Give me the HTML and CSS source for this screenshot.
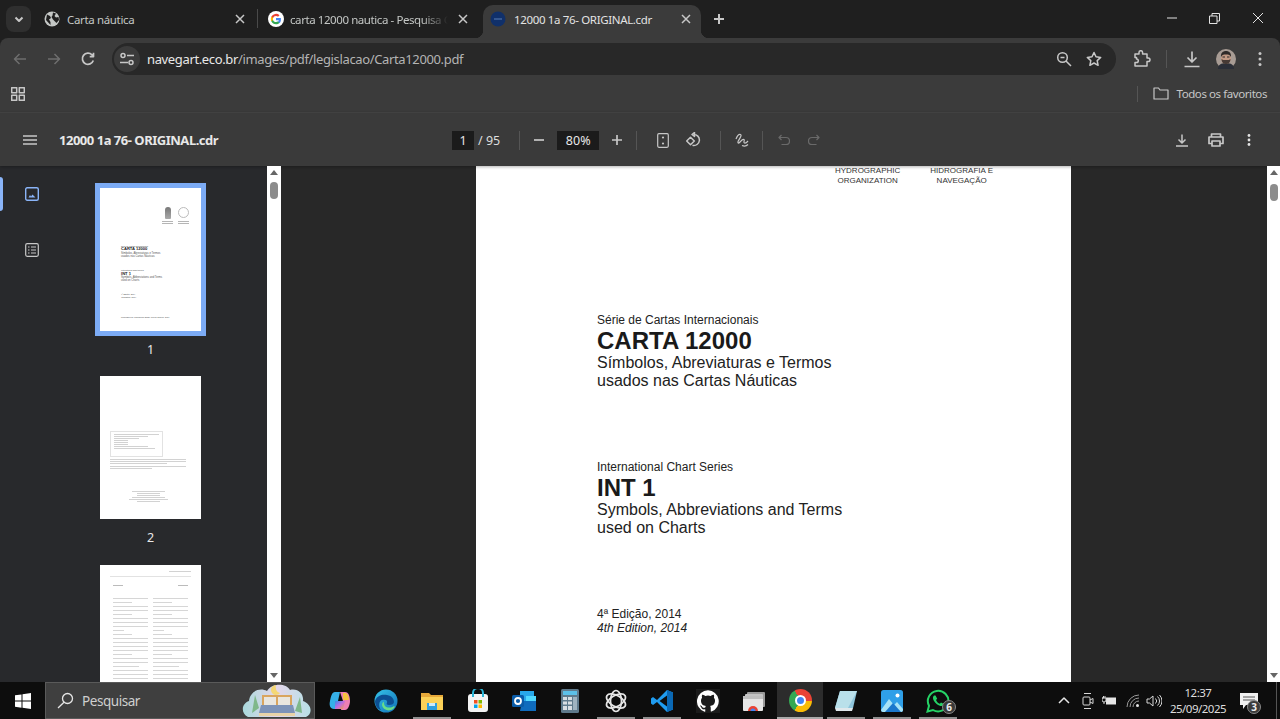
FILE: index.html
```html
<!DOCTYPE html>
<html lang="pt-BR">
<head>
<meta charset="utf-8">
<title>12000 1a 76- ORIGINAL.cdr</title>
<link rel="stylesheet" href="styles.css">
</head>
<body>
<div class="tabstrip">
  <button class="tabsearch"><svg width="12" height="12" viewBox="0 0 12 12"><path d="M2.5 4.5 6 8l3.5-3.5" class="st2"/></svg></button>
  <div class="tab tab1">
    <svg class="fav" width="16" height="16" viewBox="0 0 16 16"><circle cx="8" cy="8" r="7.5" fill="#c4c7c5"/><path d="M3 3.5l3 1.5 1 2-2 1.500 1.500 2.500v3L2 9zM9 1.500l3 1-1.500 2.500L12 6.500l2.500-.5.500 3-2.500 3L10.500 10 9 8.500 7.500 6l1-1.500z" fill="#1f1f1f"/></svg>
    <span class="tabtitle">Carta náutica</span>
    <svg class="tabx" width="10" height="10" viewBox="0 0 10 10"><path d="M1 1l8 8M9 1l-8 8" class="st15"/></svg>
  </div>
  <i class="tabsep"></i>
  <div class="tab tab2">
    <svg class="fav" width="16" height="16" viewBox="0 0 16 16"><circle cx="8" cy="8" r="8" fill="#fff"/><path d="M12.900 8.200c0-.4 0-.8-.1-1.100H8v2.100h2.800c-.1.700-.5 1.200-1 1.600v1.300h1.700c1-.9 1.400-2.300 1.400-3.900z" fill="#4285f4"/><path d="M8 13.200c1.400 0 2.600-.5 3.500-1.300l-1.700-1.300c-.5.300-1.100.5-1.800.5-1.400 0-2.500-.9-2.900-2.200H3.300v1.300A5.200 5.200 0 0 0 8 13.200z" fill="#34a853"/><path d="M5.100 8.900a3.100 3.100 0 0 1 0-1.900V5.700H3.300a5.200 5.200 0 0 0 0 4.600z" fill="#fbbc05"/><path d="M8 4.900c.8 0 1.500.3 2 .8l1.500-1.500A5.200 5.200 0 0 0 3.300 5.700L5.100 7C5.500 5.800 6.600 4.900 8 4.900z" fill="#ea4335"/></svg>
    <span class="tabtitle fade">carta 12000 nautica - Pesquisa G</span>
    <svg class="tabx" width="10" height="10" viewBox="0 0 10 10"><path d="M1 1l8 8M9 1l-8 8" class="st15"/></svg>
  </div>
  <div class="tab tab3">
    <svg class="fav" width="16" height="16" viewBox="0 0 16 16"><circle cx="8" cy="8" r="7.500" fill="#10306a"/><path d="M4 8h8" stroke="#5a7fb5" stroke-width="1"/></svg>
    <span class="tabtitle">12000 1a 76- ORIGINAL.cdr</span>
    <svg class="tabx" width="10" height="10" viewBox="0 0 10 10"><path d="M1 1l8 8M9 1l-8 8" class="st15"/></svg>
  </div>
  <svg class="newtab" width="12" height="12" viewBox="0 0 12 12"><path d="M6 1v10M1 6h10" class="st2"/></svg>
  <div class="winctl">
    <svg width="10" height="10" viewBox="0 0 10 10"><path d="M0 5h10" class="st1"/></svg>
    <svg width="11" height="11" viewBox="0 0 11 11"><path d="M.5 3h7.500v7.500H.5zM3 3V.5h7.500V8H8" class="st1"/></svg>
    <svg width="12" height="12" viewBox="0 0 12 12"><path d="M1 1l10 10M11 1L1 11" class="st1"/></svg>
  </div>
</div>

<div class="toolbar">
  <svg class="navb dim" width="16" height="16" viewBox="0 0 16 16"><path d="M14 8H3M7.500 3 2.500 8l5 5" class="stdim"/></svg>
  <svg class="navb dim" width="16" height="16" viewBox="0 0 16 16"><path d="M2 8h11M8.500 3l5 5-5 5" class="stdim"/></svg>
  <svg class="navb" width="16" height="16" viewBox="0 0 16 16"><path d="M13.300 9.500A5.600 5.600 0 1 1 12 3.800L13.500 5.500M13.500 1.800v3.800H9.700" class="st17"/></svg>
  <div class="omnibox">
    <span class="tune"><svg width="16" height="14" viewBox="0 0 16 14"><circle cx="4" cy="3.500" r="2" class="st15"/><path d="M8 3.500h7M1 10.500h8" class="st15"/><circle cx="12" cy="10.500" r="2" class="st15"/></svg></span>
    <span class="url"><b>navegart.eco.br</b>/images/pdf/legislacao/Carta12000.pdf</span>
    <svg class="omnii" width="16" height="16" viewBox="0 0 16 16"><circle cx="6.500" cy="6.500" r="4.800" class="st15"/><path d="M10 10l5 5M4.500 6.500h4" class="st15"/></svg>
    <svg class="omnii" width="16" height="16" viewBox="0 0 16 16"><path d="M8 1.500l2 4.300 4.700.6-3.500 3.200.9 4.700L8 12l-4.100 2.300.9-4.700L1.300 6.400 6 5.800z" class="st15"/></svg>
  </div>
  <svg class="ext" width="18" height="18" viewBox="0 0 18 18"><path d="M2 4h4V2.500a1.800 1.800 0 0 1 3.600 0V4h4.400v4h1.200a1.800 1.800 0 0 1 0 3.600H14V16H2v-3.500h1.500a1.800 1.800 0 0 0 0-3.600H3.500V7.500H2z" class="st15"/></svg>
  <i class="vsep s1"></i>
  <svg class="dl" width="18" height="18" viewBox="0 0 18 18"><path d="M9 1.500V12M4.500 7.500 9 12l4.500-4.500M1.500 16.500h15" class="st17"/></svg>
  <svg class="avatar" width="20" height="20" viewBox="0 0 20 20"><circle cx="10" cy="10" r="10" fill="#a89c94"/><path d="M2 20c0-4 3-6 8-6s8 2 8 6z" fill="#2b2f38"/><ellipse cx="10" cy="9" rx="5" ry="6" fill="#c39a84"/><path d="M5 8c-.5-4 2-6 5-6s5.500 2 5 6c-1-2-2-2.500-5-2.500S6 6 5 8z" fill="#2f2a28"/><path d="M5.500 10c1 1 2 1 4.500 1s3.500 0 4.500-1c0 3-2 5-4.500 5s-4.500-2-4.500-5z" fill="#463a35"/><path d="M6.500 8h2.500M11 8h2.500" stroke="#2f2a28" stroke-width="1"/></svg>
  <svg class="more" width="4" height="16" viewBox="0 0 4 16"><circle cx="2" cy="2.500" r="1.500" fill="#c7c7c7"/><circle cx="2" cy="8" r="1.500" fill="#c7c7c7"/><circle cx="2" cy="13.500" r="1.500" fill="#c7c7c7"/></svg>
</div>

<div class="bookmarks">
  <svg width="14" height="14" viewBox="0 0 14 14"><path d="M.7.700h5v5h-5zM8.300.700h5v5h-5zM.7 8.300h5v5h-5zM8.300 8.300h5v5h-5z" class="st15"/></svg>
  <i class="vsep s2"></i>
  <svg class="folder" width="16" height="13" viewBox="0 0 16 13"><path d="M1 12V1h4.500l1.500 2h8v9z" class="st12"/></svg>
  <span class="allfav">Todos os favoritos</span>
</div>

<div class="pdfbar">
  <div class="pdfleft">
    <svg width="14" height="10" viewBox="0 0 14 10"><path d="M0 1h14M0 5h14M0 9h14" class="st17"/></svg>
    <span class="docname">12000 1a 76- ORIGINAL.cdr</span>
  </div>
  <div class="pdfmid">
    <span class="numbox pg">1</span>
    <span class="tot">/ 95</span>
    <i class="vsep s3"></i>
    <svg class="m1" width="10" height="2" viewBox="0 0 10 2"><path d="M0 1h10" class="st17"/></svg>
    <span class="numbox zm">80%</span>
    <svg class="m2" width="10" height="10" viewBox="0 0 10 10"><path d="M0 5h10M5 0v10" class="st17"/></svg>
    <i class="vsep s4"></i>
    <svg class="m3" width="12" height="15" viewBox="0 0 12 15"><rect x=".7" y=".7" width="10.600" height="13.600" rx="1.200" class="st12"/><circle cx="6" cy="4.500" r="1.100" fill="#c7c7c7"/><circle cx="6" cy="10.500" r="1.100" fill="#c7c7c7"/></svg>
    <svg class="m4" width="16" height="16" viewBox="0 0 16 16"><path d="M6 2.500l2.500-2v4zM7.500 2.500a5.500 5.500 0 1 1-1 10.800" class="st15"/><path d="M4.500 5.200 8.300 9l-3.800 3.800L.7 9z" class="st15"/></svg>
    <i class="vsep s5"></i>
    <svg class="m5" width="14" height="14" viewBox="0 0 14 14"><path d="M1 6c1-2.500 3-5 4.500-4.500C7 2 5 5 3.500 7.500 2.500 9.500 3 11 4.500 9.500 6 8 7.500 6 9 6.500c1 .5-1 3 .5 3.500 1 .3 2.500-.8 3.500-2M7 12.500c2.500 1 4.500.5 6-1" class="st12"/></svg>
    <i class="vsep s6"></i>
    <svg class="m6" width="12" height="12" viewBox="0 0 12 12"><path d="M3.500 1 1 3.500 3.500 6M1.500 3.500H8a3 3 0 0 1 0 7H3.500" class="stdim2"/></svg>
    <svg class="m7" width="12" height="12" viewBox="0 0 12 12"><path d="M8.500 1 11 3.500 8.500 6M10.500 3.500H4a3 3 0 0 0 0 7h4.500" class="stdim2"/></svg>
  </div>
  <div class="pdfright">
    <svg width="12" height="13" viewBox="0 0 12 13"><path d="M6 .5V8.500M2.500 5.500 6 9l3.500-3.500M0 12h12" class="st15"/></svg>
    <svg width="16" height="14" viewBox="0 0 16 14"><path d="M3.500 4V1h9v3M3.500 10.500H1V4h14v6.500h-2.500M4 8h8v5H4z" class="st17"/></svg>
    <svg class="pmore" width="4" height="12" viewBox="0 0 4 12"><circle cx="2" cy="1.500" r="1.400" fill="#e3e3e3"/><circle cx="2" cy="6" r="1.400" fill="#e3e3e3"/><circle cx="2" cy="10.500" r="1.400" fill="#e3e3e3"/></svg>
  </div>
</div>

<div class="main">
  <aside class="sidebar">
    <nav class="rail">
      <div class="railitem active"><svg width="14" height="14" viewBox="0 0 14 14"><rect x=".7" y=".7" width="12.600" height="12.600" rx="1.500" class="stblue"/><path d="M3.500 10.500 5 8l1 1.500 1.500-2 3 3z" fill="#8ab4f8"/></svg></div>
      <div class="railitem"><svg width="14" height="14" viewBox="0 0 14 14"><rect x=".7" y=".7" width="12.600" height="12.600" rx="1.500" class="st12"/><path d="M3 4h1.500M6 4h5M3 7h1.500M6 7h5M3 10h1.500M6 10h5" class="st12"/></svg></div>
    </nav>
    <div class="thumbs">
      <figure class="thumb current">
        <div class="sheet s-one">
          <div class="logos">
            <span class="logo"><span class="crest"></span><i></i><i></i></span>
            <span class="logo"><span class="seal"></span><i></i><i></i></span>
          </div>
          <p class="t-s">Série de Cartas Internacionais</p>
          <p class="t-b">CARTA 12000</p>
          <p class="t-m">Símbolos, Abreviaturas e Termos<br>usados nas Cartas Náuticas</p>
          <p class="t-s gap">International Chart Series</p>
          <p class="t-b">INT 1</p>
          <p class="t-m">Symbols, Abbreviations and Terms<br>used on Charts</p>
          <p class="t-s gap2">4ª Edição, 2014<br>4th Edition, 2014</p>
          <p class="t-s gap3">Publicado por: Marinha do Brasil, Rio de Janeiro, 2014</p>
        </div>
        <figcaption>1</figcaption>
      </figure>
      <figure class="thumb second">
        <div class="sheet s-two">
          <div class="boxed"><i></i><i class="w8"></i><i class="w6"></i><i class="w3"></i><i class="w3"></i><i class="w3"></i><i class="w8"></i><i class="w9"></i></div>
          <div class="para"><i></i><i></i><i class="w8"></i></div>
          <div class="para"><i></i><i class="w6"></i></div>
          <div class="imprint"><i class="w8"></i><i class="w6"></i><i class="w6"></i><i class="w8"></i><i class="w9"></i><i class="w6"></i></div>
        </div>
        <figcaption>2</figcaption>
      </figure>
      <figure class="thumb">
        <div class="sheet s-three">
          <div class="runhead"><i></i></div>
          <div class="titles"><i></i><i></i></div>
          <div class="cols">
            <div class="col"><i></i><i class="w6"></i><i></i><i></i><i class="w6"></i><i></i><i></i><i></i><i class="w3"></i><i class="w6"></i><i></i><i></i><i></i><i></i><i class="w6"></i><i></i><i></i><i class="w8"></i><i></i><i></i><i></i><i class="w6"></i></div>
            <div class="col"><i></i><i class="w6"></i><i></i><i></i><i class="w6"></i><i></i><i></i><i></i><i class="w3"></i><i class="w6"></i><i></i><i></i><i></i><i></i><i class="w6"></i><i></i><i></i><i class="w8"></i><i></i><i></i><i></i><i class="w6"></i></div>
          </div>
        </div>
      </figure>
    </div>
  </aside>
  <div class="scrollbar">
    <i class="up"></i><i class="grip"></i><i class="down"></i>
  </div>
  <section class="viewer">
    <article class="page">
      <div class="orgs"><p>HYDROGRAPHIC<br>ORGANIZATION</p><p>HIDROGRAFIA E<br>NAVEGAÇÃO</p></div>
      <div class="cover pt">
        <p class="small">Série de Cartas Internacionais</p>
        <h1>CARTA 12000</h1>
        <p class="sub">Símbolos, Abreviaturas e Termos<br>usados nas Cartas Náuticas</p>
      </div>
      <div class="cover en">
        <p class="small">International Chart Series</p>
        <h1>INT 1</h1>
        <p class="sub">Symbols, Abbreviations and Terms<br>used on Charts</p>
      </div>
      <div class="cover ed">
        <p class="edn">4ª Edição, 2014</p>
        <p class="edn"><em>4th Edition, 2014</em></p>
      </div>
    </article>
  </section>
  <div class="scrollbar right">
    <i class="up"></i><i class="grip"></i><i class="down"></i>
  </div>
</div>

<footer class="taskbar">
  <div class="start"><svg width="16" height="16" viewBox="0 0 16 16"><path d="M0 2.300 6.500 1.400v6.200H0zM7.500 1.200 16 0v7.600H7.500zM0 8.500h6.500v6.200L0 13.800zM7.500 8.500H16V16l-8.500-1.200z" fill="#fff"/></svg></div>
  <div class="search">
    <svg width="17" height="17" viewBox="0 0 17 17"><circle cx="10.500" cy="6.500" r="5" class="stw"/><path d="M7 10.200 1 16" class="stw"/></svg>
    <span>Pesquisar</span>
    <svg class="bed" width="70" height="36" viewBox="0 0 70 36"><defs><linearGradient id="cl" x1="0" y1="0" x2="1" y2="0"><stop offset="0" stop-color="#a9d9dc"/><stop offset=".5" stop-color="#e4d6ea"/><stop offset="1" stop-color="#b8e0e6"/></linearGradient></defs><path d="M6 34C-2 30 0 20 7 18 8 8 18 4 25 8 30 0 44 0 48 7c8-2 14 4 13 11 9 3 10 13 3 16z" fill="url(#cl)"/><path d="M10 30 13 12l4 13zM60 30 58 14l-5 14z" fill="#7fb88a"/><path d="M20 12h30v12H20z" fill="#d9a55f"/><path d="M22 14h12v8H22zM36 14h12v8H36z" fill="#e9e6df"/><path d="M19 22h32l2 8H17z" fill="#7d93b8"/><path d="M17 30h36v3H17z" fill="#e8d3a8"/><path d="M34 2a5 5 0 1 0 4 8 6 6 0 0 1-4-8z" fill="#f4d774"/></svg>
  </div>
  <div class="apps">
    <div class="app"><svg width="22" height="22" viewBox="0 0 22 22"><defs><linearGradient id="cp" x1="0" y1="0" x2="1" y2="1"><stop offset="0" stop-color="#2f8fe8"/><stop offset=".5" stop-color="#c56ce0"/><stop offset="1" stop-color="#f5a13a"/></linearGradient></defs><path d="M6 2h5L9 11l-1 8H5C1 19 0 15 1 11 2 6 3 2 6 2z" fill="#35b0e8"/><path d="M11 2h5c4 0 5 5 5 9s-2 9-5 9h-4l2-9z" fill="#ee7fb5"/><path d="M6 11h10l-2 8H6z" fill="url(#cp)"/><path d="M14 3h3c2 1 3 4 3 7h-6z" fill="#f7c23e"/></svg></div>
    <div class="app"><svg width="24" height="24" viewBox="0 0 24 24"><defs><linearGradient id="ed" x1="0" y1="0" x2="1" y2="1"><stop offset="0" stop-color="#36c4e8"/><stop offset="1" stop-color="#1170b8"/></linearGradient></defs><circle cx="12" cy="12" r="11.500" fill="url(#ed)"/><path d="M1 12C3 6 9 5 13 6c5 1 7 4 7 7 0 2-2 3-5 3-2 0-3-1-2-2 1-3-2-4-5-3-3 1-4 6-1 10C3 20 1 16 1 12z" fill="#0c4f93"/><path d="M8 16c1 5 7 7 11 4 2-1 2-3 1-3-3 2-7 2-9 0-1-1-1-3-1-4-1 0-2 1-2 3z" fill="#66dd8a"/></svg></div>
    <div class="app on"><svg width="22" height="20" viewBox="0 0 22 20"><path d="M0 2h8l2 2h12v15H0z" fill="#e7a93a"/><path d="M0 6h22v13H0z" fill="#fbd158"/><path d="M6 12h10v7H6z" fill="#2f9fe0"/><path d="M8 12h6v3H8z" fill="#cfeaf8"/></svg></div>
    <div class="app"><svg width="22" height="24" viewBox="0 0 22 24"><rect x="1" y="5" width="20" height="18" rx="3" fill="#f3f3f3"/><path d="M6 8V4a5 5 0 0 1 10 0v4" fill="none" stroke="#29b6d8" stroke-width="2"/><path d="M7 11h3.500v3.500H7z" fill="#f25022"/><path d="M11.500 11H15v3.500h-3.500z" fill="#7fba00"/><path d="M7 15.500h3.500V19H7z" fill="#00a4ef"/><path d="M11.500 15.500H15V19h-3.500z" fill="#ffb900"/></svg></div>
    <div class="app"><svg width="24" height="22" viewBox="0 0 24 22"><path d="M8 1h14v10H8z" fill="#28a8ea"/><path d="M10 11h14v10H8z" fill="#0f6cbd"/><path d="M14 6h10v5H14z" fill="#50d9ff"/><rect x="0" y="5" width="12" height="12" rx="1.500" fill="#0a5ca8"/><circle cx="6" cy="11" r="3" fill="none" stroke="#fff" stroke-width="1.800"/></svg></div>
    <div class="app"><svg width="18" height="24" viewBox="0 0 18 24"><rect width="18" height="24" rx="1.500" fill="#5f7a8c"/><rect x="2" y="2" width="14" height="4" fill="#5cc0e8"/><path d="M2 8h4v3H2zM7 8h4v3H7zM2 12.500h4v3H2zM7 12.500h4v3H7zM2 17h4v4H2zM7 17h4v4H7z" fill="#d7dde2"/><path d="M12 8h4v13h-4z" fill="#9fb3c0"/></svg></div>
    <div class="app on"><svg width="24" height="24" viewBox="0 0 24 24"><g fill="none" stroke="#e6e6e6" stroke-width="1.700"><ellipse cx="12" cy="12" rx="5.500" ry="10.500"/><ellipse cx="12" cy="12" rx="5.500" ry="10.500" transform="rotate(60 12 12)"/><ellipse cx="12" cy="12" rx="5.500" ry="10.500" transform="rotate(120 12 12)"/></g></svg></div>
    <div class="app on"><svg width="24" height="24" viewBox="0 0 24 24"><path d="M17 1 7 11 3 8 1 9.500v5L3 16l4-3 10 10 6-2.500V3.500z" fill="#1f9cf0"/><path d="M17 6.500v11L9.500 12z" fill="#0d0d0d"/><path d="M17 1l6 2.500v17L17 23z" fill="#0a68b4"/></svg></div>
    <div class="app"><span class="ghbox"><svg width="22" height="22" viewBox="0 0 16 16"><path d="M8 .2a8 8 0 0 0-2.500 15.600c.4.100.5-.2.500-.4v-1.400c-2.200.5-2.700-1-2.700-1-.4-.9-.9-1.200-.9-1.200-.7-.5.100-.5.100-.5.800.1 1.200.8 1.200.8.700 1.200 1.900.9 2.300.7.100-.5.300-.9.500-1.100-1.800-.2-3.600-.9-3.600-4 0-.9.300-1.600.8-2.100-.1-.2-.4-1 .1-2.100 0 0 .7-.2 2.200.8a7.600 7.600 0 0 1 4 0c1.500-1 2.200-.8 2.200-.8.400 1.100.2 1.900.1 2.100.5.600.8 1.300.8 2.100 0 3.100-1.900 3.700-3.600 3.900.3.200.5.700.5 1.500v2.200c0 .2.100.5.600.4A8 8 0 0 0 8 .2z" fill="#fff"/></svg></span></div>
    <div class="app"><svg width="22" height="20" viewBox="0 0 22 20"><rect x="4" y="1" width="18" height="15" rx="1" fill="#9a9a9a"/><rect x="2" y="3" width="18" height="15" rx="1" fill="#c4c4c4"/><rect x="0" y="5" width="20" height="15" rx="1" fill="#e6e6e6"/><rect x="0" y="5" width="20" height="3" fill="#bfbfbf"/><path d="M5 20a5 5 0 0 1 10 0z" fill="#ea4335"/><path d="M7.500 20a2.500 2.500 0 0 1 5 0z" fill="#4285f4"/></svg></div>
    <div class="app active"><span class="chrome"><span></span></span></div>
    <div class="app on"><svg width="24" height="22" viewBox="0 0 24 22"><path d="M6 1h17l-4 17H1z" fill="#8fc6dc"/><path d="M6 1h17l-9 17H1z" fill="#b9e0ea"/><path d="M1 18h18l-1 3H2z" fill="#dfe8ec"/></svg></div>
    <div class="app on"><svg width="22" height="22" viewBox="0 0 22 22"><rect width="22" height="22" rx="2.500" fill="#2f9fe8"/><path d="M0 20 8 9l5 6 3-3 6 7v1a2 2 0 0 1-2 2H2a2 2 0 0 1-2-2z" fill="#a7e3f7"/><path d="M4 22l8-9 8 9z" fill="#1b78cc"/><circle cx="16.500" cy="5.500" r="2" fill="#fff"/></svg></div>
    <div class="app on wa"><svg width="24" height="24" viewBox="0 0 24 24"><path d="M1.500 22.500 3 16.800A10.300 10.300 0 1 1 7 21z" fill="none" stroke="#25d366" stroke-width="2"/><path d="M8 6.500c-1.300 1-1.500 3 0 5.500s4 4.500 6.500 5c2 .3 3-1 3-2.300l-2.500-1.300-1.200 1.300c-1.500-.5-3-2-3.800-3.800l1.200-1.200L9.500 6.500z" fill="#25d366"/></svg><span class="badge">6</span></div>
  </div>
  <div class="tray">
    <svg class="caret" width="12" height="7" viewBox="0 0 12 7"><path d="M1 6l5-5 5 5" class="stw15"/></svg>
    <svg class="t-meet" width="12" height="18" viewBox="0 0 12 18"><path d="M2 1.500h7M2 16.500h7" class="stw1"/><rect x="1" y="5" width="7" height="8" rx="1" class="stw1"/><path d="M8 8l3-1.500v5L8 10" class="stw1"/></svg>
    <svg class="t-bat" width="15" height="11" viewBox="0 0 15 11"><path d="M4 2.500h10v7H4z" fill="#e6e6e6"/><path d="M0 3h1.500V1M3 3V1M0 3v2a2 2 0 0 0 4 0V3zM2 7v2" class="stw1"/></svg>
    <svg class="t-wifi" width="14" height="14" viewBox="0 0 14 14"><path d="M1 13A12 12 0 0 1 13 1M4 13a9 9 0 0 1 9-9M7 13a6 6 0 0 1 6-6" fill="none" stroke="#9a9a9a" stroke-width="1"/><circle cx="11.500" cy="11.500" r="1.500" fill="#e6e6e6"/></svg>
    <svg class="t-vol" width="16" height="14" viewBox="0 0 16 14"><path d="M1 5h2.500L7 2v10L3.500 9H1zM9.500 4.500a3.500 3.500 0 0 1 0 5M11.500 2.500a6 6 0 0 1 0 9M13.500 1a8.500 8.500 0 0 1 0 12" class="stw1"/></svg>
    <div class="clock"><span>12:37</span><span>25/09/2025</span></div>
    <div class="notif"><svg width="18" height="16" viewBox="0 0 18 16"><path d="M0 0h18v12H6l-3 4v-4H0z" fill="#f0f0f0"/><path d="M3 4h12M3 7h12" stroke="#555" stroke-width="1"/></svg><span class="badge">3</span></div>
    <i class="showdesk"></i>
  </div>
</footer>
</body>
</html>
```

FILE: styles.css
```css
* { box-sizing: border-box; }
html, body { margin: 0; height: 719px; overflow: hidden; }
body { display: flex; flex-direction: column; background: #1f1f1f; font-family: "Noto Sans", "Open Sans", sans-serif; color: #e3e3e3; }
p, h1, figure { margin: 0; }
svg { display: block; flex: none; }
i { display: block; }

.st1, .st12, .st15, .st17, .st2, .stdim, .stdim2, .stblue, .stw, .stw1, .stw15 { fill: none; stroke-linejoin: round; }
.st1 { stroke: #e3e3e3; stroke-width: 1; }
.st12 { stroke: #c7c7c7; stroke-width: 1.200; }
.st15 { stroke: #c7c7c7; stroke-width: 1.500; }
.st17 { stroke: #c7c7c7; stroke-width: 1.700; }
.st2 { stroke: #c7c7c7; stroke-width: 2; }
.stdim { stroke: #6e6e6e; stroke-width: 1.500; }
.stdim2 { stroke: #6a6a6a; stroke-width: 1.200; }
.stblue { stroke: #8ab4f8; stroke-width: 1.400; }
.stw { stroke: #e6e6e6; stroke-width: 1.300; }
.stw1 { stroke: #d8d8d8; stroke-width: 1; }
.stw15 { stroke: #e6e6e6; stroke-width: 1.500; }

/* tab strip */
.tabstrip { height: 38px; flex: none; display: flex; align-items: flex-start; padding-left: 6px; background: #1f1f1f; position: relative; }
.tabsearch { width: 25px; height: 26px; margin-top: 6px; padding: 0; border: 0; border-radius: 8px; background: #2f2f2f; display: flex; align-items: center; justify-content: center; }
.tab { height: 33px; margin-top: 5px; display: flex; align-items: center; position: relative; font-size: 11.500px; letter-spacing: -.35px; color: #c4c7c5; }
.tabtitle { white-space: nowrap; overflow: hidden; flex: 1; }
.tab1 { width: 219px; margin-left: 7px; padding: 0 12px 5px 6px; }
.tab2 { width: 225px; padding: 0 15px 5px 10px; }
.tab2 .fav { margin-right: 6px; }
.tab2 .tabx { margin-left: 2px; }
.tab2 .tabtitle { letter-spacing: -.42px; }
.tab3 { width: 218px; padding: 0 10px 5px 7px; background: #3b3b3b; border-radius: 10px 10px 0 0; color: #e3e3e3; }
.tab3::before, .tab3::after { content: ""; position: absolute; bottom: 0; width: 8px; height: 8px; }
.tab3::before { left: -8px; background: radial-gradient(circle at 0 0, transparent 8px, #3b3b3b 8.500px); }
.tab3::after { right: -8px; background: radial-gradient(circle at 100% 0, transparent 8px, #3b3b3b 8.500px); }
.fav { margin-right: 7px; }
.tab3 .fav { margin-right: 8px; }
.fade { -webkit-mask-image: linear-gradient(90deg, #000 132px, transparent 158px); mask-image: linear-gradient(90deg, #000 132px, transparent 158px); }
.tabx { margin-left: 8px; }
.tabsep { width: 1px; height: 19px; margin-top: 9px; background: #4a4a4a; }
.newtab { margin: 13px 0 0 12px; }
.winctl { margin-left: auto; margin-top: 12px; display: flex; align-items: center; gap: 32px; padding-right: 16px; }

/* toolbar */
.toolbar { height: 40px; flex: none; display: flex; align-items: center; background: #3b3b3b; border-radius: 8px 8px 0 0; padding: 2px 13px 0 12px; }
.navb { margin-right: 18px; }
.navb:nth-child(3) { margin-right: 16px; }
.omnibox { width: 1004px; height: 32px; display: flex; align-items: center; border-radius: 16px; background: #282828; padding: 0 14px 0 2px; }
.tune { width: 26px; height: 26px; border-radius: 50%; background: #3b3b3b; display: flex; align-items: center; justify-content: center; flex: none; }
.url { flex: 1; margin-left: 7px; font-size: 13px; letter-spacing: -.36px; color: #b4b4b4; white-space: nowrap; }
.url b { font-weight: 400; color: #e8e8e8; }
.omnii { margin-left: 14px; }
.ext { margin-left: 17px; }
.vsep { width: 1px; background: #555; flex: none; }
.s1 { height: 18px; margin-left: 15px; }
.dl { margin-left: 16px; }
.avatar { margin-left: 15px; }
.more { margin-left: 22px; }

/* bookmarks */
.bookmarks { height: 34px; flex: none; display: flex; align-items: center; background: #3b3b3b; padding: 0 13px 3px 11px; }
.s2 { height: 16px; margin-left: auto; }
.folder { margin-left: 15px; }
.allfav { margin-left: 7px; font-size: 11.500px; letter-spacing: -.42px; color: #c7c7c7; white-space: nowrap; }

/* pdf bar */
.pdfbar { height: 54px; flex: none; display: grid; grid-template-columns: 429px 1fr auto; align-items: center; background: #3a3a3a; border-top: 1px solid #414141; box-shadow: 0 1px 3px rgba(0,0,0,.3); padding: 1px 29px 0 23px; position: relative; }
.pdfleft { display: flex; align-items: center; gap: 22px; }
.docname { font-size: 13px; font-weight: 700; color: #e8e8e8; white-space: nowrap; letter-spacing: -.48px; }
.pdfmid { display: flex; align-items: center; }
.numbox { height: 19px; display: flex; align-items: center; justify-content: center; background: #1b1b1b; font-size: 12.500px; color: #e8e8e8; }
.pg { width: 22px; }
.tot { margin-left: 4px; font-size: 12.500px; color: #dedede; white-space: nowrap; }
.s3 { height: 19px; margin-left: 19px; }
.m1 { margin-left: 14px; }
.zm { width: 42px; margin-left: 13px; }
.m2 { margin-left: 13px; }
.s4 { height: 19px; margin-left: 14px; }
.m3 { margin-left: 20px; }
.m4 { margin-left: 17px; }
.s5 { height: 19px; margin-left: 18px; }
.m5 { margin-left: 14px; }
.s6 { height: 19px; margin-left: 13px; }
.m6 { margin-left: 15px; }
.m7 { margin-left: 18px; }
.pdfright { display: flex; align-items: center; gap: 20px; }
.pmore { margin-left: 3px; }

/* main */
.main { flex: none; height: 516px; display: flex; overflow: hidden; background: #282828; }
.sidebar { width: 267px; flex: none; display: flex; background: #28292c; overflow: hidden; }
.rail { width: 64px; flex: none; padding-top: 11px; display: flex; flex-direction: column; gap: 22px; }
.railitem { height: 34px; display: flex; align-items: center; justify-content: center; position: relative; }
.railitem.active::before { content: ""; position: absolute; left: 0; top: 0; bottom: 0; width: 3px; background: #8ab4f8; border-radius: 0 3px 3px 0; }
.thumbs { width: 173px; display: flex; flex-direction: column; align-items: center; padding-top: 17px; gap: 17px; }
.thumb { display: flex; flex-direction: column; align-items: center; }
.thumb figcaption { margin-top: 10px; font-size: 12.500px; line-height: 18px; color: #e8e8e8; }
.thumb.current figcaption { margin-top: 5px; }
.thumb.second { margin-bottom: 1px; }
.sheet { width: 101px; height: 143px; background: #fff; color: #444; font-family: "Liberation Sans", Arial, sans-serif; flex: none; overflow: hidden; }
.current .sheet { width: 111px; height: 153px; border: 5px solid #7cabf5; }
.sheet i { height: 1px; background: #d2d2d2; margin-bottom: 1px; }
.s-one { padding: 19px 12px 0 21px; }
.s-one p { white-space: nowrap; }
.logos { display: flex; justify-content: flex-end; gap: 5px; height: 38px; }
.logo { display: flex; flex-direction: column; align-items: center; width: 11px; }
.logo i { width: 100%; background: #b5b5b5; margin-bottom: .5px; }
.crest { width: 6px; height: 12px; margin-bottom: 2px; background: linear-gradient(#777, #aaa); border-radius: 3px 3px 1px 1px; }
.seal { width: 11px; height: 11px; margin-bottom: 3px; border: 1px solid #bbb; border-radius: 50%; }
.t-s { font-size: 2px; line-height: 2.400px; color: #444; }
.t-b { font-size: 4.100px; line-height: 4.600px; font-weight: 700; color: #222; }
.t-m { font-size: 2.700px; line-height: 3.100px; color: #555; }
.gap { margin-top: 11px; }
.gap2 { margin-top: 11px; }
.gap3 { margin-top: 18px; }
.s-two { padding: 55px 15px 0 10px; }
.boxed { border: 1px solid #e2e2e2; padding: 2px 3px; width: 53px; height: 26px; }
.boxed i { margin-bottom: 1px; }
.para { margin: 2px 0 0; }
.para i { margin-bottom: 1px; }
.imprint { margin: 22px 16px 0 17px; display: flex; flex-direction: column; align-items: center; }
.imprint i { width: 100%; }
.w9 { width: 90%; }
.w8 { width: 75%; }
.w6 { width: 55%; }
.w3 { width: 30%; }
.imprint .w8 { width: 75%; }
.imprint .w6 { width: 55%; }
.imprint .w9 { width: 90%; }
.s-three { padding: 6px 10px 0; }
.runhead { border-bottom: 1px solid #e2e2e2; height: 6px; display: flex; justify-content: flex-end; }
.runhead i { width: 22px; height: 1px; }
.titles { display: flex; justify-content: space-between; margin: 8px 3px 11px; }
.titles i { width: 10px; height: 1px; background: #bbb; }
.cols { display: grid; grid-template-columns: 1fr 1fr; gap: 5px; padding: 0 3px; }
.col i { margin-bottom: 3px; background: #d6d6d6; }

.scrollbar { width: 14px; flex: none; background: #fff; display: flex; flex-direction: column; align-items: center; padding-top: 4px; position: relative; }
.scrollbar .up { width: 0; height: 0; border-left: 4.500px solid transparent; border-right: 4.500px solid transparent; border-bottom: 5px solid #666; }
.scrollbar .grip { width: 8px; height: 17px; margin-top: 7px; border-radius: 4px; background: #8c8c8c; }
.scrollbar .down { width: 0; height: 0; border-left: 4.500px solid transparent; border-right: 4.500px solid transparent; border-top: 5px solid #666; position: absolute; bottom: 4px; }
.scrollbar.right { width: 13px; }
.scrollbar.right .grip { margin-top: 9px; }

.viewer { flex: 1; display: flex; justify-content: center; overflow: hidden; background: #282828; }
.page { width: 595px; height: 516px; flex: none; background: #fff; color: #222; font-family: "Liberation Sans", Arial, sans-serif; padding-left: 121px; margin-right: 1px; }
.orgs { display: flex; justify-content: flex-end; gap: 30px; padding-right: 78px; font-size: 8px; line-height: 10px; text-align: center; color: #333; height: 20px; }
.pt { margin-top: 128px; }
.en { margin-top: 71px; }
.ed { margin-top: 70px; }
.small { font-size: 12px; line-height: 13px; }
h1 { font-size: 24px; line-height: 27px; font-weight: 700; color: #1a1a1a; }
.sub { font-size: 16px; line-height: 18px; }
.edn { font-size: 12px; line-height: 14px; }

/* taskbar */
.taskbar { height: 37px; flex: none; display: flex; align-items: stretch; background: #0d0d0d; color: #e6e6e6; }
.start { width: 45px; display: flex; align-items: center; justify-content: center; flex: none; }
.search { width: 270px; flex: none; display: flex; align-items: center; background: #3f3f3f; border: 1px solid #5a5a5a; padding-left: 11px; font-size: 13.500px; letter-spacing: -.45px; color: #cfcfcf; position: relative; }
.search span { margin-left: 8px; }
.bed { margin-left: auto; margin-right: 2px; }
.apps { display: flex; margin-left: 2px; }
.app { width: 46px; display: flex; align-items: center; justify-content: center; position: relative; }
.app.on::after { content: ""; position: absolute; left: 4px; right: 4px; bottom: 0; height: 2px; background: #8f8f8f; }
.app.active { background: #2c2c2c; }
.app.active::after { content: ""; position: absolute; left: 0; right: 0; bottom: 0; height: 2px; background: #aaa; }
.ghbox { width: 24px; height: 24px; display: flex; align-items: center; justify-content: center; background: #1b1b1b; }
.chrome { width: 23px; height: 23px; border-radius: 50%; background: conic-gradient(from -30deg, #ea4335 0 120deg, #fbbc05 120deg 240deg, #34a853 240deg 360deg); display: flex; align-items: center; justify-content: center; }
.chrome span { box-sizing: content-box; width: 7px; height: 7px; border-radius: 50%; background: #4285f4; border: 2px solid #fff; }
.badge { position: absolute; width: 14px; height: 14px; border-radius: 50%; background: #3a3a3a; border: 1px solid #888; font-size: 10px; font-weight: 700; line-height: 12px; text-align: center; color: #eee; }
.wa .badge { left: 27px; top: 18px; }
.tray { flex: 1; display: flex; align-items: center; padding-left: 97px; position: relative; }
.t-meet { margin-left: 12px; }
.t-bat { margin-left: 8px; }
.t-wifi { margin-left: 9px; }
.t-vol { margin-left: 6px; }
.clock { display: flex; flex-direction: column; align-items: center; width: 58px; margin-left: 7px; font-size: 11.500px; letter-spacing: -.5px; line-height: 16px; color: #dedede; }
.notif { margin-left: 13px; position: relative; }
.notif .badge { left: 7px; top: 7px; }
.showdesk { position: absolute; right: 3px; top: 0; bottom: 0; width: 1px; background: #555; }
```
